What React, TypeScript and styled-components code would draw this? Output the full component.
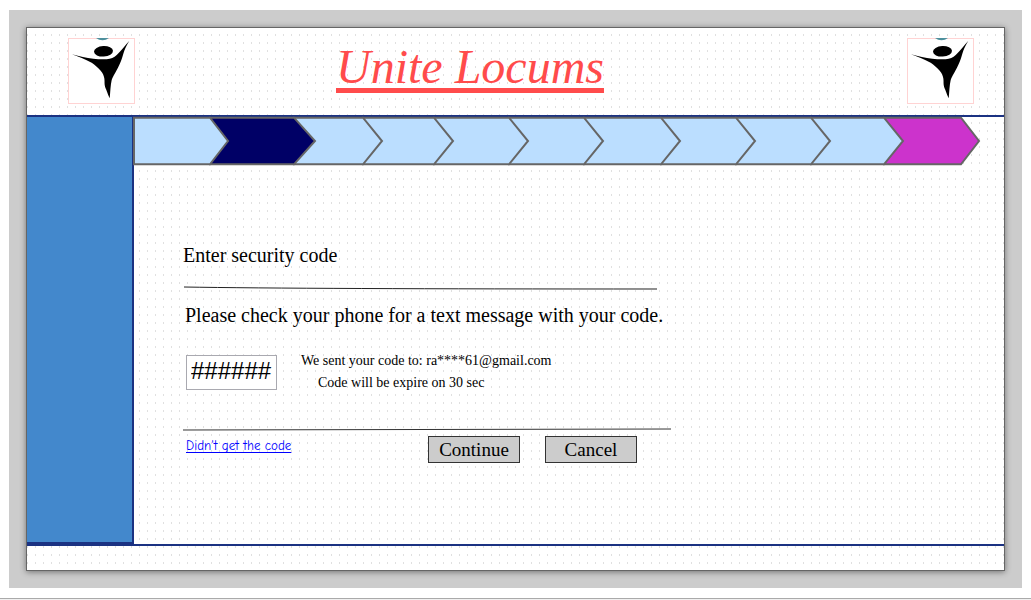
import React from "react";
import styled, { createGlobalStyle } from "styled-components";

const serif = `"Liberation Serif", "Times New Roman", serif`;
const navy = "#1b3282";

const GlobalStyle = createGlobalStyle`
  * { box-sizing: border-box; }
  body { margin: 0; background: #ffffff; font-family: ${serif}; color: #000000; }
  h1, h2, p { margin: 0; font-weight: normal; }
`;

const Page = styled.div`
  display: flex;
  flex-direction: column;
  min-height: 100vh;
  padding-top: 10px;
`;

const Desk = styled.div`
  flex: 1;
  display: flex;
  margin: 0 9px 10px;
  padding: 17px;
  background: #cccccc;
`;

const Rule = styled.div`
  height: 2px;
  border-top: 1px solid #aaaaaa;
  background: #f0f0f0;
`;

const Sheet = styled.div`
  flex: 1;
  display: flex;
  flex-direction: column;
  border: 1px solid #666666;
  box-shadow: 0 1px 6px rgba(0, 0, 0, 0.45);
  background-color: #ffffff;
  background-image: conic-gradient(from 0deg at 1px 2px, transparent 270deg, #e0e0e0 0);
  background-size: 8px 8px;
  background-position: 0 6px;
`;

const Header = styled.header`
  display: flex;
  align-items: flex-start;
  justify-content: space-between;
  height: 89px;
  padding: 10px 30px 0 41px;
  border-bottom: 2px solid ${navy};
`;

const LogoBox = styled.div`
  display: flex;
  width: 67px;
  height: 66px;
  border: 1px solid #ffd3d3;
  background: #ffffff;
`;

const LogoDrawing = styled.svg`
  overflow: visible;
`;

const Title = styled.h1`
  font-size: 48px;
  line-height: 58px;
  font-style: italic;
  color: #ff4b4b;
  padding-right: 102px;
  text-decoration: underline;
  text-decoration-thickness: 5px;
  text-underline-offset: 5px;
`;

const Body = styled.div`
  flex: 1;
  display: flex;
`;

const Sidebar = styled.aside`
  flex: none;
  width: 107px;
  background: #4388cc;
  border-right: 2px solid ${navy};
  border-bottom: 2px solid ${navy};
`;

const Main = styled.main`
  flex: 1;
  min-width: 0;
`;

const StepsDrawing = styled.svg`
  display: block;
  margin-left: -1px;
  overflow: visible;
`;

const Form = styled.form`
  max-width: 537px;
  padding: 74px 0 0 49px;
`;

const Heading = styled.h2`
  margin-bottom: 16px;
  font-size: 20px;
  line-height: 30px;
`;

const Divider = styled.svg`
  display: block;
  width: 100%;
  height: 4px;
`;

const Prompt = styled.p`
  padding: 10px 0 0 2px;
  font-size: 20px;
  line-height: 30px;
`;

const CodeRow = styled.div`
  display: flex;
  gap: 24px;
  margin: 25px 0 38px;
  padding-left: 3px;
`;

const CodeInput = styled.input`
  width: 91px;
  height: 35px;
  padding: 0 4px 4px;
  border: 1px solid #a9a9b0;
  border-radius: 0;
  background: #ffffff;
  color: #000000;
  font-family: "Liberation Sans", Arial, sans-serif;
  font-size: 24px;
`;

const Notes = styled.div`
  display: flex;
  flex-direction: column;
  gap: 10px;
`;

const Note = styled.p<{ $indent?: boolean }>`
  padding-left: ${(p) => (p.$indent ? 17 : 0)}px;
  font-size: 14px;
  line-height: 12px;
`;

const Actions = styled.div`
  display: flex;
  align-items: flex-start;
  gap: 25px;
  margin-top: 4px;
  padding: 0 34px 0 3px;
`;

const ResendLink = styled.a`
  margin-right: auto;
  color: #0000ff;
  font-family: "Comic Sans MS", "Comic Neue", Lato, sans-serif;
  font-size: 13px;
  line-height: 20px;
  text-decoration-thickness: 1px;
  text-underline-offset: 2px;
  text-decoration-skip-ink: none;
`;

const Button = styled.button`
  width: 92px;
  height: 27px;
  padding: 0;
  border: 1px solid #333333;
  border-radius: 0;
  background: #cccccc;
  color: #000000;
  font-family: ${serif};
  font-size: 19px;
  line-height: 24px;
`;

const Footer = styled.footer`
  height: 26px;
  border-top: 2px solid ${navy};
`;

const light = "#bbdeff";
const steps = [
  { shoulder: 77, tip: 95, fill: light },
  { shoulder: 161, tip: 182, fill: "#000066" },
  { shoulder: 230, tip: 249, fill: light },
  { shoulder: 301, tip: 320, fill: light },
  { shoulder: 376, tip: 395, fill: light },
  { shoulder: 451, tip: 470, fill: light },
  { shoulder: 528, tip: 547, fill: light },
  { shoulder: 603, tip: 622, fill: light },
  { shoulder: 678, tip: 697, fill: light },
  { shoulder: 751, tip: 770, fill: light },
  { shoulder: 828, tip: 846, fill: "#cc33cc" },
];

/* Steps are painted last to first, so that each tip lies over its successor. */
const Steps = () => (
  <StepsDrawing width="848" height="49" viewBox="0 0 848 49" role="img" aria-label="Progress: step 2 of 11">
    {steps
      .map((s, i) => {
        const left = i ? steps[i - 1].shoulder : 1;
        return (
          <path
            key={s.tip}
            d={`M${left} 0.7H${s.shoulder}L${s.tip} 24L${s.shoulder} 47.3H${left}Z`}
            fill={s.fill}
            stroke="#666666"
            strokeWidth="2"
          />
        );
      })
      .reverse()}
  </StepsDrawing>
);

const Logo = () => (
  <LogoBox>
    <LogoDrawing width="65" height="64" viewBox="69 39 65 64" role="img" aria-label="Unite Locums logo">
      <path d="M96 38H109Q106 40.300 102.500 40.300Q99 40.300 96 38Z" fill="#4d8f9c" />
      <ellipse cx="103.5" cy="51.3" rx="9.5" ry="5.3" transform="rotate(-3 103.5 51.3)" />
      <path d="M72 54.200C80 56.500 86 58 93.300 58.800C98 59.300 103 59.500 106.700 59.200C111 58.800 114 57.500 116.700 55C121 51 125 45.500 129.200 41C127.500 44 125.500 47.500 124.300 50.700C123 54.500 122.300 58 120.700 61.700C119 66 117 69.500 115 73.300C113.500 76 112.500 77.500 111.700 80C110.500 85 110.400 91 109.700 98.300C108.500 96 107.800 94 107 91.700C106 89 105 87.500 104.700 85C104.400 82.500 104.700 81 104.300 78.300C103.800 75.500 102.700 73 100.700 70.700C98 67.500 95 65 91.700 62.700C86 59.500 79 57 72 54.200Z" />
    </LogoDrawing>
  </LogoBox>
);

export default function App() {
  return (
    <>
      <GlobalStyle />
      <Page>
        <Desk>
          <Sheet>
            <Header>
              <Logo />
              <Title>Unite Locums</Title>
              <Logo />
            </Header>
            <Body>
              <Sidebar />
              <Main>
                <Steps />
                <Form onSubmit={(e) => e.preventDefault()}>
                  <Heading>Enter security code</Heading>
                  <Divider viewBox="0 0 488 4" preserveAspectRatio="none" aria-hidden="true">
                    <path d="M1 1Q120 3 474 3" fill="none" stroke="#222222" />
                  </Divider>
                  <Prompt>Please check your phone for a text message with your code.</Prompt>
                  <CodeRow>
                    <CodeInput aria-label="Security code" defaultValue="######" />
                    <Notes>
                      <Note>We sent your code to: ra****61@gmail.com</Note>
                      <Note $indent>Code will be expire on 30 sec</Note>
                    </Notes>
                  </CodeRow>
                  <Divider viewBox="0 0 488 4" preserveAspectRatio="none" aria-hidden="true">
                    <path d="M0 2L488 1" fill="none" stroke="#333333" />
                  </Divider>
                  <Actions>
                    <ResendLink href="#resend">Didn't get the code</ResendLink>
                    <Button type="submit">Continue</Button>
                    <Button type="button">Cancel</Button>
                  </Actions>
                </Form>
              </Main>
            </Body>
            <Footer />
          </Sheet>
        </Desk>
        <Rule />
      </Page>
    </>
  );
}
